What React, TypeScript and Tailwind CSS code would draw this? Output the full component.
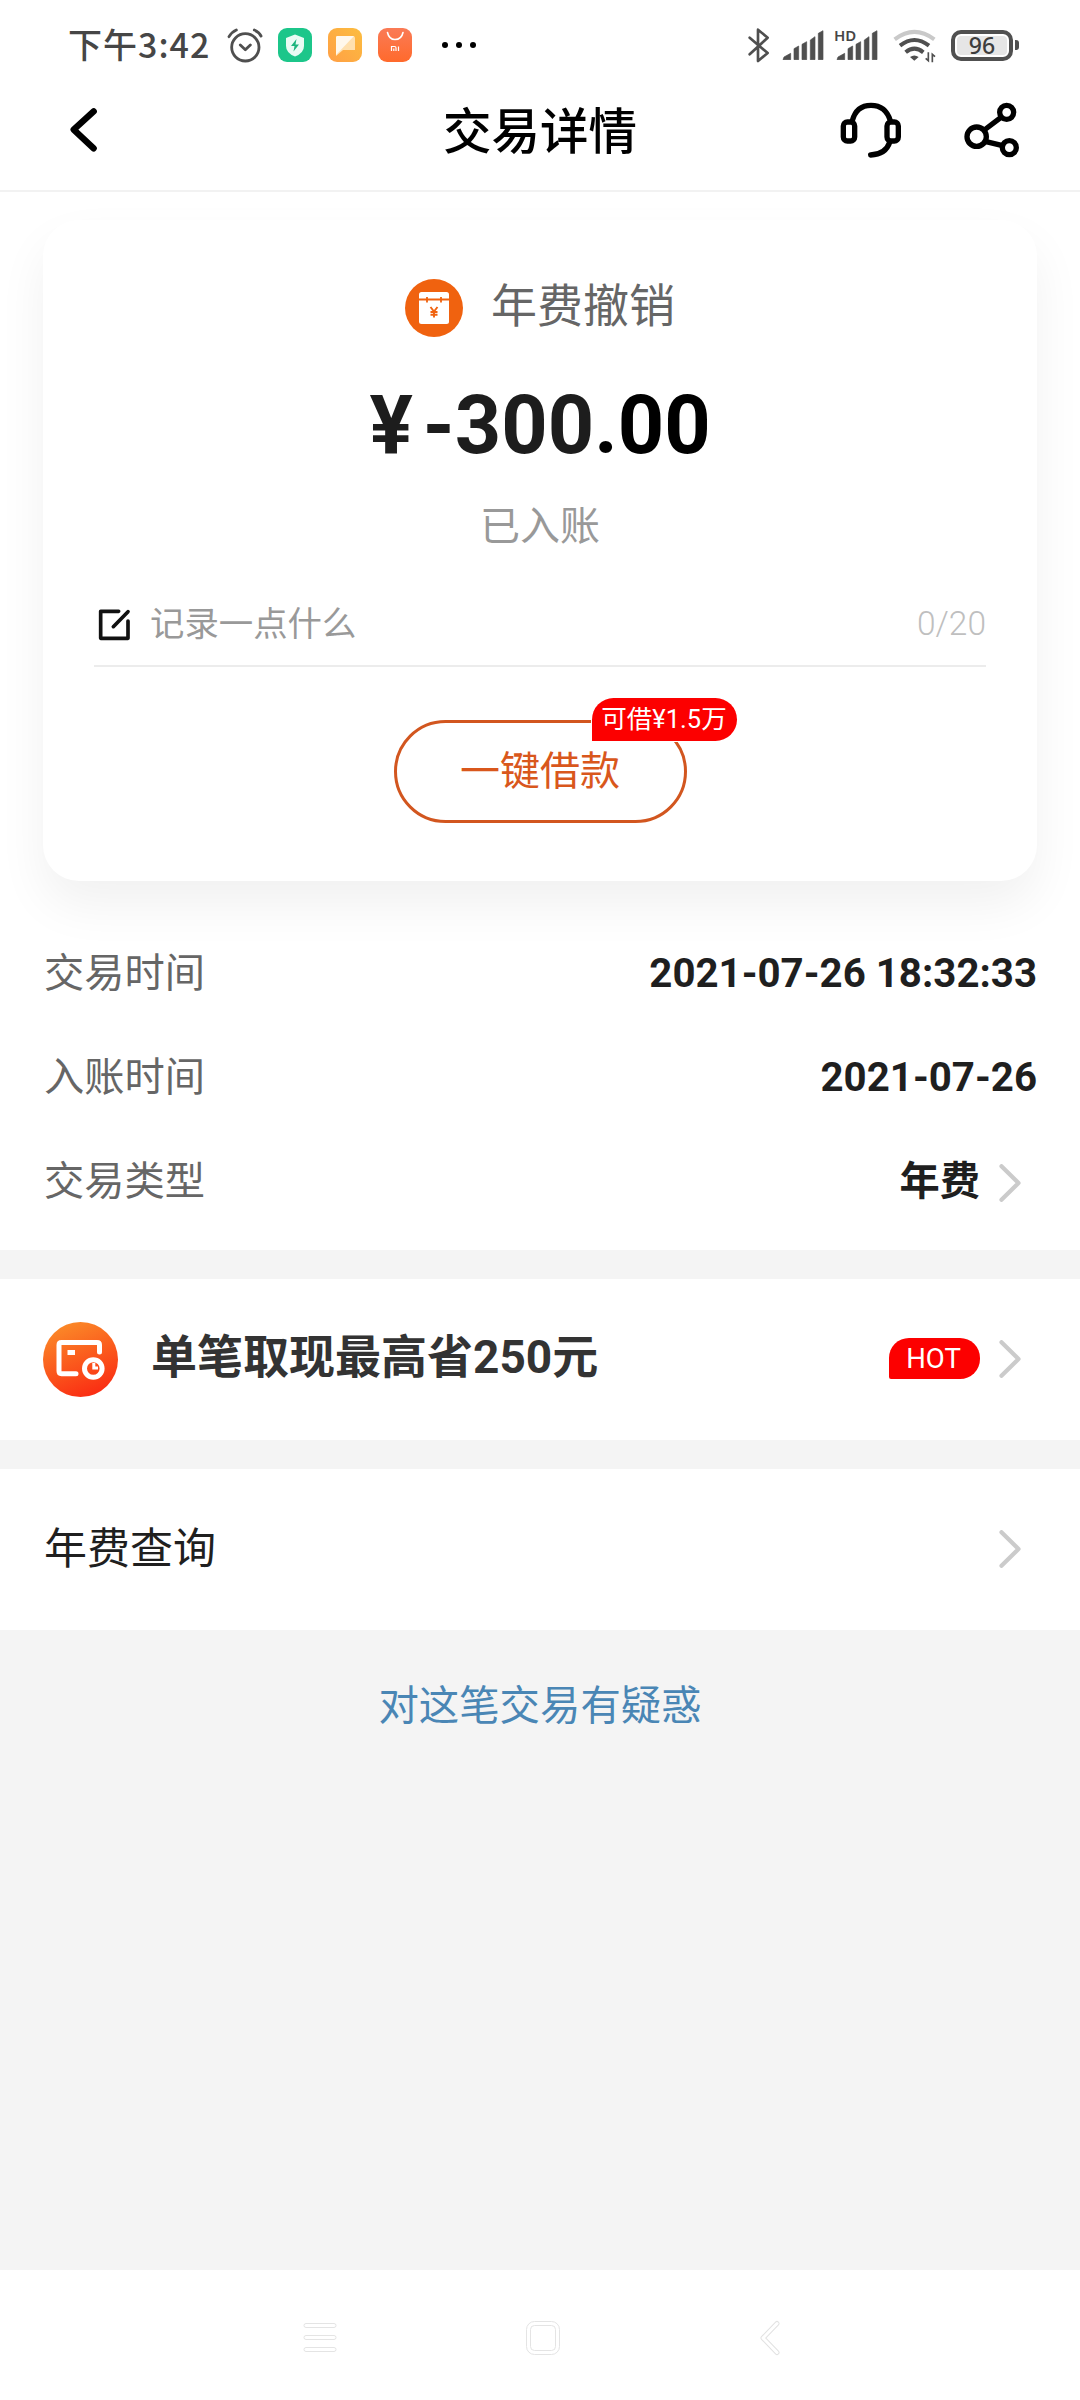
import React from "react";

function Chevron() {
  return (
    <svg width="22" height="38" viewBox="0 0 22 38" fill="none" stroke="#cbcbcb" strokeWidth="4.2" strokeLinecap="round" strokeLinejoin="round">
      <path d="M2.500 2.200L19.500 19L2.500 35.800" />
    </svg>
  );
}

function Signal() {
  return (
    <svg width="42" height="30" viewBox="248 58 122 90" fill="#4f4f4f" stroke="#4f4f4f" strokeWidth="2" strokeLinejoin="round">
      <path d="M249 147L252 139L272 128V147ZM282 147V114L296 106V147ZM306 147V101L320 93V147ZM331 147V88L345 78V147ZM355 147V68L369 60V147Z" />
    </svg>
  );
}

function StatusBar() {
  return (
    <div className="flex h-[90px] items-center justify-between pl-[68px] pr-[61px] text-[#464646]">
      <div className="flex h-full items-center">
        <span className="-mt-[2px] w-[142px] whitespace-nowrap font-['Noto_Sans_CJK_SC'] text-[34px] font-medium leading-[40px] tracking-[1px]">下午3:42</span>
        <svg className="ml-[17px] mt-[1px]" width="36" height="36" viewBox="560 52 108 108" fill="none" stroke="#4f4f4f" strokeWidth="8.500" strokeLinecap="round">
          <circle cx="615" cy="110" r="41" />
          <path d="M600 103L615 117L630 103M566 78Q574 64 588 58M642 58Q656 64 662 76" strokeLinejoin="round" />
        </svg>
        <svg className="ml-[15px]" width="34" height="34" viewBox="0 0 34 34">
          <rect width="34" height="34" rx="9" fill="#1cc68a" />
          <path d="M17 6.5L26 10V18Q26 25 17 28.5Q8 25 8 18V10Z" fill="#e9fbf4" />
          <path d="M18.5 11L13 18H16.5L15.5 23.5L21 16.5H17.5Z" fill="#1cb57e" />
        </svg>
        <svg className="ml-4" width="34" height="34" viewBox="0 0 34 34">
          <defs><linearGradient id="note" x1="0" y1="1" x2="1" y2="0"><stop stopColor="#ff9f45" /><stop offset="1" stopColor="#fcbd3f" /></linearGradient></defs>
          <rect width="34" height="34" rx="9" fill="url(#note)" />
          <path d="M9 8H25Q27 8 27 10V22H15L8 28V9Z" fill="#ffe0ae" />
          <path d="M9 8H26L8 27V9Z" fill="#fff8ec" />
        </svg>
        <svg className="ml-4" width="34" height="34" viewBox="0 0 34 34" fill="none" stroke="#fff">
          <defs><linearGradient id="shop" x1="0" y1="0" x2="0" y2="1"><stop stopColor="#fa7b56" /><stop offset="1" stopColor="#ff6a2c" /></linearGradient></defs>
          <rect width="34" height="34" rx="9" fill="url(#shop)" stroke="none" />
          <path d="M9.5 4.5Q11 11.5 17 11.5Q23.500 11.5 25 4.500" strokeWidth="1.6" strokeLinecap="round" />
          <path d="M13.500 23V18.500H16.500Q18 18.500 18 20V23M15.800 20.500V23M20.500 18.500V23" strokeWidth="1.200" />
        </svg>
        <div className="ml-[30px] flex gap-2">
          <i className="size-[6px] rounded-full bg-black" />
          <i className="size-[6px] rounded-full bg-black" />
          <i className="size-[6px] rounded-full bg-black" />
        </div>
      </div>
      <div className="flex h-full items-center">
        <svg width="22" height="36" viewBox="144 50 66 108" fill="none" stroke="#4f4f4f" strokeWidth="8" strokeLinecap="round" strokeLinejoin="round">
          <path d="M149 82L203 128L174 152V58L203 82L149 132" />
        </svg>
        <div className="ml-[12px]"><Signal /></div>
        <div className="relative ml-[12px]">
          <Signal />
          <span className="absolute -left-[2px] -top-[2px] bg-white pr-px font-['Noto_Sans'] text-[15px] font-semibold leading-[14px]">HD</span>
        </div>
        <svg className="ml-[15px] mt-[2px]" width="44" height="34" viewBox="578 58 132 102" fill="none" stroke="#4f4f4f" strokeWidth="12">
          <path d="M583 89Q642 44 702 89" stroke="#c9c9c9" />
          <path d="M599 108Q642 74 686 108M616 128Q642 106 669 128" />
          <path d="M629 142Q642 133 655 142L642 153Z" fill="#4f4f4f" stroke="none" />
          <path d="M684 128V153L676 146M696 158V134L704 141" strokeWidth="5" />
        </svg>
        <div className="ml-[14px] flex h-[31px] w-[62px] items-center justify-center rounded-[10px] border-4 border-[#505050] bg-white p-[2px]">
          <div className="flex h-full w-full items-center justify-center rounded-[4px] bg-[#e6e6e6] font-['Noto_Sans'] text-[23px] font-medium leading-none text-[#3d3d3d]">96</div>
        </div>
        <i className="ml-[2px] h-[10px] w-[4px] rounded-r-[3px] bg-[#505050]" />
      </div>
    </div>
  );
}

function Header() {
  return (
    <header className="grid h-[102px] grid-cols-[1fr_auto_1fr] items-center border-b-2 border-[#f2f2f2] pb-[18px]">
      <svg className="ml-[69px] -mt-[2px]" width="29" height="46" viewBox="87 290 87 138" fill="none" stroke="#000" strokeWidth="19" strokeLinecap="round" strokeLinejoin="round">
        <path d="M161 303L101 358L161 414" />
      </svg>
      <h1 className="mt-[3px] text-[48.5px] font-medium leading-[60px] text-black">交易详情</h1>
      <div className="-mt-[3px] flex items-center justify-end gap-[62px] pr-[60px]">
        <svg width="62" height="56" viewBox="419 274 186 168" fill="none" stroke="#000" strokeWidth="16" strokeLinecap="round">
          <rect x="429" y="334" width="34" height="57" rx="12" />
          <rect x="560" y="334" width="34" height="57" rx="12" />
          <path d="M456 330Q468 284 512 284Q556 284 570 330M568 395Q556 431 511 433" />
        </svg>
        <svg width="56" height="56" viewBox="792 274 168 168" fill="none" stroke="#000" strokeWidth="16">
          <circle cx="830" cy="378" r="29" />
          <circle cx="920" cy="305" r="21" />
          <circle cx="928" cy="411" r="21" />
          <path d="M853 358L903 320M858 393L908 405" />
        </svg>
      </div>
    </header>
  );
}

function SummaryCard() {
  return (
    <section className="mx-[43px] mt-[28px] flex h-[661px] flex-col items-center rounded-[36px] bg-white pt-[50px] shadow-[0_24px_50px_rgba(0,0,0,0.06)]">
      <div className="flex h-[76px] items-center">
        <svg width="58" height="58" viewBox="0 0 58 58">
          <circle cx="29" cy="29" r="29" fill="#f0620f" />
          <rect x="14" y="13" width="30" height="32" rx="2.500" fill="#fff" />
          <path d="M14 20.500H44M22 18V23.500M36 18V23.500" stroke="#f0620f" strokeWidth="1.800" />
          <path d="M25.500 28L29 32.500L32.500 28M29 32.500V38.500M25.500 33H32.500M25.500 35.800H32.500" fill="none" stroke="#f0620f" strokeWidth="1.900" />
        </svg>
        <span className="-mt-[5px] ml-[28px] text-[46px] leading-[60px] text-[#666]">年费撤销</span>
      </div>
      <div className="mt-[32px] flex h-[96px] items-center whitespace-nowrap text-[81px] font-bold leading-[96px] text-[#1d1d1d]">
        <span>¥</span>
        <span className="ml-[10px]">-300</span>
        <span className="text-black">.00</span>
      </div>
      <div className="mt-[23px] text-[40px] leading-[60px] text-[#999]">已入账</div>
      <div className="mt-[27px] flex h-[83px] w-[892px] items-center justify-between border-b-2 border-[#ececec]">
        <div className="flex items-center">
          <svg className="ml-[4px]" width="34" height="34" viewBox="176 145 102 102" fill="none" stroke="#111" strokeWidth="11" strokeLinecap="round" strokeLinejoin="round">
            <path d="M238 155H184V236H266V184M266 156L222 201" />
          </svg>
          <span className="-mt-[2px] ml-[18px] text-[34.400px] leading-[50px] text-[#999]">记录一点什么</span>
        </div>
        <span className="-mt-[2px] text-[33.500px] font-light leading-[50px] text-[#bfbfbf]">0/20</span>
      </div>
      <button className="relative mt-[53px] h-[103px] w-[293px] rounded-full border-[3px] border-[#d2561f] text-[40px] leading-[60px] text-[#d9571c]">
        一键借款
        <span className="absolute left-[195px] top-[-25px] flex h-[43px] w-[145px] items-center justify-center whitespace-nowrap rounded-[22px] rounded-bl-none bg-[#fc0000] text-[25.500px] leading-none text-white ring-1 ring-white">可借¥1.5万</span>
      </button>
    </section>
  );
}

function Detail({ label, value, link }: { label: string; value: string; link?: boolean }) {
  return (
    <div className="flex h-[104px] items-center justify-between pl-[44px] pr-[43px] text-[40.250px] leading-[60px]">
      <span className="text-[#666]">{label}</span>
      <span className="flex items-center font-bold text-[#1f1f1f]">
        {value}
        {link && <span className="ml-[19px] mr-[16px] mt-[2px]"><Chevron /></span>}
      </span>
    </div>
  );
}

function NavBar() {
  return (
    <nav className="flex h-[130px] items-start bg-white pt-[50px]">
      <svg className="ml-[303px]" width="34" height="36" viewBox="0 0 34 36" fill="none" stroke="#e4e4e4">
        <rect x="1" y="3.500" width="32" height="4" rx="2" />
        <rect x="1" y="15.500" width="32" height="4" rx="2" />
        <rect x="1" y="27.500" width="32" height="4" rx="2" />
      </svg>
      <svg className="ml-[188px]" width="36" height="36" viewBox="0 0 36 36" fill="none" stroke="#e4e4e4">
        <rect x="1.500" y="1.500" width="33" height="33" rx="8" />
        <rect x="5.500" y="5.500" width="25" height="25" rx="4" />
      </svg>
      <svg className="ml-[198px]" width="22" height="36" viewBox="0 0 22 36" fill="none" strokeLinecap="round" strokeLinejoin="round">
        <path d="M18 3.500L4 18L18 32.500" stroke="#e2e2e2" strokeWidth="5" />
        <path d="M18 3.500L4 18L18 32.500" stroke="#fff" strokeWidth="3" />
      </svg>
    </nav>
  );
}

export default function App() {
  return (
    <div className="flex h-[2400px] w-[1080px] flex-col overflow-hidden bg-[#f4f4f4] font-[Roboto,'Noto_Sans_CJK_SC',sans-serif]">
      <div className="h-[1250px] bg-white">
        <StatusBar />
        <Header />
        <SummaryCard />
        <div className="mt-[41px]">
          <Detail label="交易时间" value="2021-07-26 18:32:33" />
          <Detail label="入账时间" value="2021-07-26" />
          <Detail label="交易类型" value="年费" link />
        </div>
      </div>
      <div className="mt-[29px] flex h-[161px] items-center bg-white pl-[43px] pr-[59px]">
        <svg width="75" height="75" viewBox="0 0 75 75" fill="none" stroke="#fff" strokeWidth="5" strokeLinecap="round">
          <defs><linearGradient id="cash" x1=".3" y1="0" x2=".7" y2="1"><stop stopColor="#fb8a28" /><stop offset="1" stopColor="#fa2a12" /></linearGradient></defs>
          <circle cx="37.500" cy="37.500" r="37.500" fill="url(#cash)" stroke="none" />
          <path d="M56.500 30V23Q56.500 20.500 54 20.500H18.500Q16 20.500 16 23V49Q16 51.700 18.500 51.700H33" />
          <path d="M24.500 30.500H32" strokeLinecap="butt" />
          <circle cx="50.300" cy="46.500" r="8.800" />
          <path d="M50.800 41V46H55" strokeWidth="3" strokeLinecap="butt" />
        </svg>
        <span className="-mt-[5px] ml-[33px] text-[46px] font-bold leading-[60px] text-[#333]">单笔取现最高省250元</span>
        <span className="-mt-[2px] ml-auto mr-[19px] flex h-[41px] w-[91px] items-center justify-center rounded-[20px] rounded-bl-[2px] bg-[#fc0000] pr-[2px] text-[27.500px] leading-none text-white">HOT</span>
        <span className="-mt-[2px]"><Chevron /></span>
      </div>
      <div className="mt-[29px] flex h-[161px] items-center justify-between bg-white pb-[2px] pl-[44px] pr-[59px]">
        <span className="text-[43px] leading-[60px] text-[#1f1f1f]">年费查询</span>
        <Chevron />
      </div>
      <a className="mt-[47px] self-center text-[40.400px] leading-[60px] text-[#4a86b5]">对这笔交易有疑惑</a>
      <div className="flex-1" />
      <NavBar />
    </div>
  );
}
